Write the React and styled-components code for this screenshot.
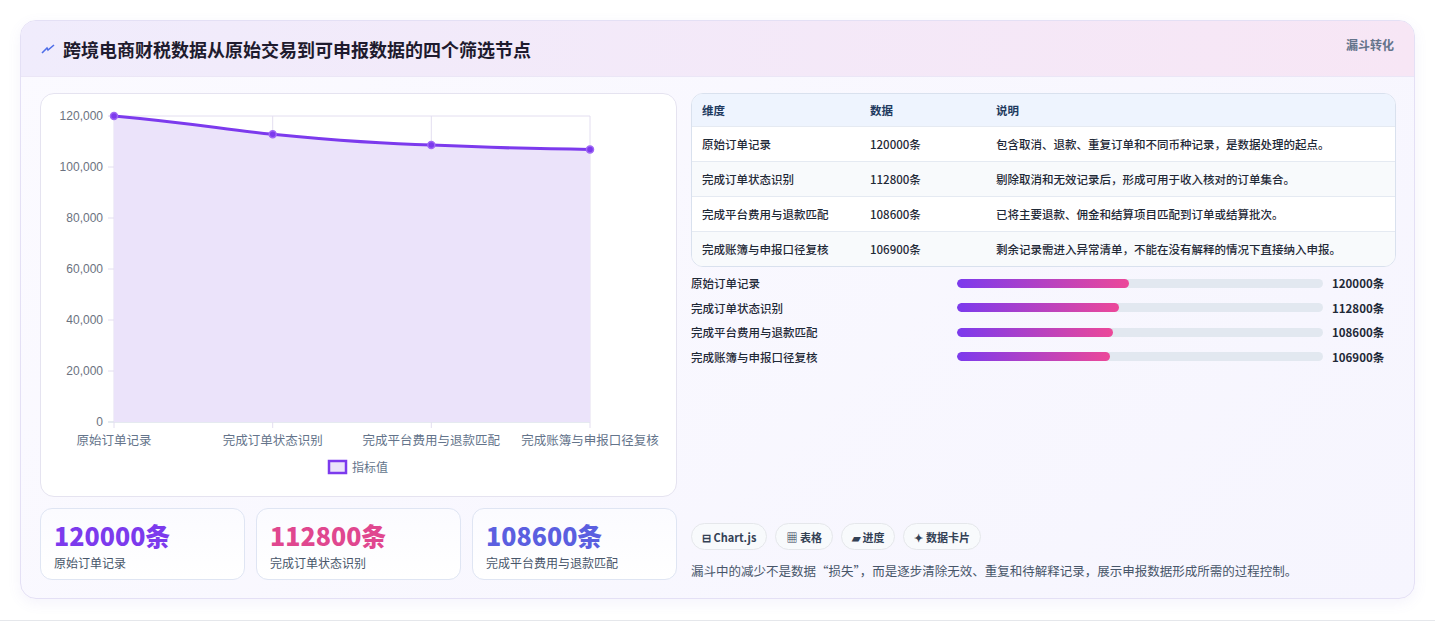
import styled, { createGlobalStyle } from "styled-components";

const Global = createGlobalStyle`
  body { margin: 0; background: #fff; font-family: "Noto Sans CJK SC", "Noto Sans", sans-serif; }
`;

const rows = [
  { name: "原始订单记录", value: 120000, note: "包含取消、退款、重复订单和不同币种记录，是数据处理的起点。" },
  { name: "完成订单状态识别", value: 112800, note: "剔除取消和无效记录后，形成可用于收入核对的订单集合。" },
  { name: "完成平台费用与退款匹配", value: 108600, note: "已将主要退款、佣金和结算项目匹配到订单或结算批次。" },
  { name: "完成账簿与申报口径复核", value: 106900, note: "剩余记录需进入异常清单，不能在没有解释的情况下直接纳入申报。" },
];

const Page = styled.div`
  padding: 20px 20px 21px 20px;
  border-bottom: 1px solid #e5e7eb;
`;
const Card = styled.div`
  border: 1px solid #e4e0f5;
  border-radius: 16px;
  overflow: hidden;
  background: linear-gradient(135deg, #fbfaff, #f6f5fe);
  box-shadow: 0 4px 14px rgba(120, 100, 200, 0.08);
`;
const Header = styled.div`
  height: 55px;
  display: flex;
  align-items: center;
  justify-content: space-between;
  padding: 0 20px;
  background: linear-gradient(90deg, #f0ecfc, #f7e6f5);
  border-bottom: 1px solid #ebe6f6;
`;
const Title = styled.h1`
  margin: 0;
  font-size: 18px;
  font-weight: 700;
  color: #1e1b2e;
  display: flex;
  align-items: center;
  gap: 8px;
`;
const Tag = styled.span`
  font-size: 12px;
  font-weight: 700;
  color: #64748b;
  align-self: flex-start;
  margin-top: 15px;
`;
const Body = styled.div`
  display: grid;
  grid-template-columns: 637px 1fr;
  gap: 14px;
  padding: 16px 18px 18px 19px;
`;
const Col = styled.div`
  display: flex;
  flex-direction: column;
`;
const ChartBox = styled.div`
  height: 402px;
  border: 1px solid #e5e3f0;
  border-radius: 14px;
  background: #fff;
`;
const Stats = styled.div`
  display: grid;
  grid-template-columns: repeat(3, 1fr);
  gap: 11px;
  margin-top: 11px;
`;
const Stat = styled.div`
  height: 72px;
  box-sizing: border-box;
  border: 1px solid #dfe5f3;
  border-radius: 12px;
  background: linear-gradient(180deg, #fbfbff, #ffffff);
  padding: 10px 13px;
`;
const StatValue = styled.div`
  font-size: 25px;
  font-weight: 800;
  line-height: 32px;
  color: ${(p) => p.$c};
`;
const StatLabel = styled.div`
  font-size: 12px;
  color: #475569;
  margin-top: 3px;
`;
const Table = styled.div`
  border: 1px solid #d9e1ee;
  border-radius: 12px;
  overflow: hidden;
  background: #fff;
`;
const Tr = styled.div`
  display: grid;
  grid-template-columns: 168px 126px 1fr;
  height: ${(p) => (p.$head ? "32px" : "34px")};
  align-items: center;
  padding-left: 10px;
  font-size: 11.5px;
  color: ${(p) => (p.$head ? "#1e3a5f" : "#1f2937")};
  font-weight: ${(p) => (p.$head ? 700 : 500)};
  background: ${(p) => (p.$head ? "#eef4fe" : p.$alt ? "#f8fafc" : "#fff")};
  border-top: ${(p) => (p.$head ? "none" : "1px solid #e5eaf2")};
`;
const Bars = styled.div`
  display: flex;
  flex-direction: column;
  gap: 13.5px;
  margin-top: 8px;
`;
const BarRow = styled.div`
  display: grid;
  grid-template-columns: 266px 366px 1fr;
  align-items: center;
  height: 11px;
  font-size: 11.5px;
  font-weight: 500;
  color: #1f2937;
`;
const Track = styled.div`
  height: 9px;
  border-radius: 5px;
  background: #e2e8f0;
  overflow: hidden;
`;
const Fill = styled.div`
  height: 100%;
  border-radius: 5px;
  background: linear-gradient(90deg, #7c3aed, #ec4899);
`;
const Val = styled.span`
  padding-left: 9px;
  font-weight: 700;
  font-size: 11.5px;
`;
const Chips = styled.div`
  display: flex;
  gap: 8px;
  margin-top: auto;
`;
const Chip = styled.span`
  height: 27px;
  box-sizing: border-box;
  padding: 0 10px;
  border: 1px solid #e5e7eb;
  border-radius: 14px;
  background: #f8fafc;
  display: flex;
  align-items: center;
  gap: 3px;
  font-size: 11px;
  font-weight: 700;
  color: #334155;
`;
const Note = styled.p`
  margin: 11px 0 0;
  font-size: 12.5px;
  color: #475569;
`;

const X = [113, 271.7, 430.3, 589];
const yOf = (v) => 421 - (v / 120000) * 306;

function Chart() {
  const pts = rows.map((r, i) => [X[i], yOf(r.value)]);
  const line = `M${pts[0][0]},${pts[0][1]} C190,122 220,128 ${pts[1][0]},${pts[1][1]} C340,140 380,143 ${pts[2][0]},${pts[2][1]} C500,147 540,148 ${pts[3][0]},${pts[3][1]}`;
  const ticks = [0, 20000, 40000, 60000, 80000, 100000, 120000];
  return (
    <svg width="636" height="402" viewBox="40 93 636 402" style={{ display: "block" }}>
      {ticks.map((t) => (
        <g key={t}>
          <line x1="107" x2="589" y1={yOf(t)} y2={yOf(t)} stroke={t === 0 ? "#cbd5e1" : "#e3def0"} />
          <text x="102" y={yOf(t) + 4} textAnchor="end" fontSize="12" fill="#6b7280" fontFamily="Liberation Sans, sans-serif">
            {t.toLocaleString("en-US")}
          </text>
        </g>
      ))}
      {X.map((x) => (
        <line key={x} x1={x} x2={x} y1="115" y2="427" stroke="#e3def0" />
      ))}
      <path d={`${line} L589,421 L113,421 Z`} fill="#ebe3fa" />
      <path d={line} fill="none" stroke="#7c3aed" strokeWidth="3" />
      {pts.map(([x, y]) => (
        <circle key={x} cx={x} cy={y} r="3.5" fill="#7c3aed" stroke="#9f67f5" strokeWidth="1.5" />
      ))}
      {rows.map((r, i) => (
        <text key={r.name} x={X[i]} y="444" textAnchor="middle" fontSize="12.5" fill="#64748b">
          {r.name}
        </text>
      ))}
      <rect x="328" y="460" width="17" height="12" fill="#ebe3fa" stroke="#7c3aed" strokeWidth="2.5" />
      <text x="351" y="471" fontSize="12" fill="#64748b">指标值</text>
    </svg>
  );
}

export default function App() {
  const colors = ["#7c3aed", "#e0478f", "#5b5fe0"];
  return (
    <Page>
      <Global />
      <Card>
        <Header>
          <Title>
            <svg width="14" height="10" viewBox="0 0 14 10">
              <path d="M1 9 L6 4 L7 6 L13 1" fill="none" stroke="#4f6ee8" strokeWidth="1.6" />
            </svg>
            跨境电商财税数据从原始交易到可申报数据的四个筛选节点
          </Title>
          <Tag>漏斗转化</Tag>
        </Header>
        <Body>
          <Col>
            <ChartBox>
              <Chart />
            </ChartBox>
            <Stats>
              {rows.slice(0, 3).map((r, i) => (
                <Stat key={r.name}>
                  <StatValue $c={colors[i]}>{r.value}条</StatValue>
                  <StatLabel>{r.name}</StatLabel>
                </Stat>
              ))}
            </Stats>
          </Col>
          <Col>
            <Table>
              <Tr $head>
                <span>维度</span>
                <span>数据</span>
                <span>说明</span>
              </Tr>
              {rows.map((r, i) => (
                <Tr key={r.name} $alt={i % 2 === 1}>
                  <span>{r.name}</span>
                  <span>{r.value}条</span>
                  <span>{r.note}</span>
                </Tr>
              ))}
            </Table>
            <Bars>
              {rows.map((r) => (
                <BarRow key={r.name}>
                  <span>{r.name}</span>
                  <Track>
                    <Fill style={{ width: `${(r.value / 255000) * 100}%` }} />
                  </Track>
                  <Val>{r.value}条</Val>
                </BarRow>
              ))}
            </Bars>
            <Chips>
              <Chip>⊟ Chart.js</Chip>
              <Chip>▦ 表格</Chip>
              <Chip>▰ 进度</Chip>
              <Chip>✦ 数据卡片</Chip>
            </Chips>
            <Note>漏斗中的减少不是数据“损失”，而是逐步清除无效、重复和待解释记录，展示申报数据形成所需的过程控制。</Note>
          </Col>
        </Body>
      </Card>
    </Page>
  );
}
